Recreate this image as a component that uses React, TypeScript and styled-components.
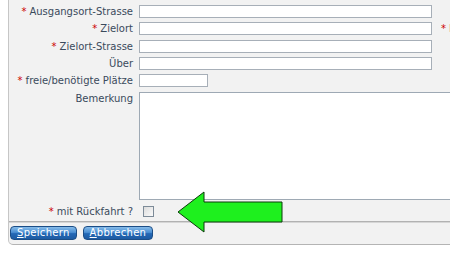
import React from "react";
import styled, { createGlobalStyle } from "styled-components";

const GlobalStyle = createGlobalStyle`
  html, body {
    margin: 0;
    background: #fff;
    overflow: hidden;
  }
  body {
    font-family: "DejaVu Sans", Verdana, sans-serif;
  }
`;

const Page = styled.div`
  position: relative;
  width: 450px;
  height: 262px;
  overflow: hidden;
`;

const Panel = styled.div`
  margin-left: 8px;
  width: 640px;
  background: #f2f2f2;
  border-left: 1px solid #c6c6c6;
  border-bottom: 1px solid #b4b4b4;
  border-bottom-left-radius: 5px;
`;

const FormGrid = styled.div`
  display: grid;
  grid-template-columns: 124px auto;
  column-gap: 6px;
  row-gap: 4.35px;
  padding-top: 5px;
  align-items: start;
`;

const Label = styled.label`
  font-size: 10px;
  line-height: 13px;
  color: #3a4a5c;
  text-align: right;
  white-space: nowrap;
`;

const Req = styled.span`
  color: #cc0000;
  margin-right: 3px;
`;

const Field = styled.div`
  display: flex;
  align-items: center;
  gap: 9px;
`;

const TextInput = styled.input<{ $w: number }>`
  box-sizing: border-box;
  width: ${(p) => p.$w}px;
  height: 13px;
  margin: 0;
  padding: 0 2px;
  border: 1px solid #a7afb8;
  background: #fff;
`;

const Hint = styled.span`
  font-size: 10px;
  line-height: 13px;
  color: #3a4a5c;
  white-space: nowrap;
`;

const Memo = styled.textarea`
  box-sizing: border-box;
  display: block;
  width: 420px;
  height: 108px;
  margin: 0;
  border: 1px solid #9ea9b4;
  background: #fff;
  resize: none;
`;

const CheckRow = styled.div`
  display: grid;
  grid-template-columns: 124px auto;
  column-gap: 6px;
  align-items: center;
  height: 22px;
  padding-top: 3px;
  box-sizing: border-box;
  border-bottom: 1px solid #b2b2b2;
  box-shadow: 0 1px 0 #d6d6d6;
`;

const Check = styled.input`
  appearance: none;
  display: block;
  box-sizing: border-box;
  width: 11px;
  height: 11px;
  margin: 0 0 0 4px;
  border: 1px solid #7d8b98;
  background: linear-gradient(135deg, #dcdcdc, #fbfbfb);
`;

const ButtonBar = styled.div`
  display: flex;
  gap: 6px;
  padding: 4px 0 4px 1px;
`;

const Button = styled.button`
  height: 14px;
  padding: 0 6px;
  font-family: "DejaVu Sans", Verdana, sans-serif;
  font-size: 10px;
  line-height: 12px;
  letter-spacing: 0.3px;
  color: #fff;
  border: 1px solid #1b4d86;
  border-radius: 4px;
  background: linear-gradient(#86bbe9 0%, #4b8fd3 45%, #2468b5 55%, #1d5ba3 100%);
  cursor: pointer;

  u {
    text-decoration: underline;
  }
`;

const Arrow = styled.svg`
  position: absolute;
  left: 177px;
  top: 191px;
`;

const rows: { label: string; req: boolean; w: number; hint?: boolean }[] = [
  { label: "Ausgangsort-Strasse", req: true, w: 293 },
  { label: "Zielort", req: true, w: 293, hint: true },
  { label: "Zielort-Strasse", req: true, w: 293 },
  { label: "Über", req: false, w: 293 },
  { label: "freie/benötigte Plätze", req: true, w: 69 },
];

export default function App() {
  return (
    <Page>
      <GlobalStyle />
      <Panel>
        <FormGrid>
          {rows.map((r) => (
            <React.Fragment key={r.label}>
              <Label>
                {r.req && <Req>*</Req>}
                {r.label}
              </Label>
              <Field>
                <TextInput $w={r.w} />
                {r.hint && (
                  <Hint>
                    <Req>*</Req>Pflichtfeld
                  </Hint>
                )}
              </Field>
            </React.Fragment>
          ))}
          <Label>Bemerkung</Label>
          <Memo />
        </FormGrid>
        <CheckRow>
          <Label>
            <Req>*</Req>mit Rückfahrt ?
          </Label>
          <div>
            <Check type="checkbox" />
          </div>
        </CheckRow>
        <ButtonBar>
          <Button>
            <u>S</u>peichern
          </Button>
          <Button>
            <u>A</u>bbrechen
          </Button>
        </ButtonBar>
      </Panel>
      <Arrow width="108" height="43" viewBox="0 0 108 43">
        <polygon
          points="1,21 27,1 27,11 105,11 105,31 27,31 27,41"
          fill="#1ef01e"
          stroke="#0a3a0a"
          strokeWidth="1"
        />
      </Arrow>
    </Page>
  );
}
